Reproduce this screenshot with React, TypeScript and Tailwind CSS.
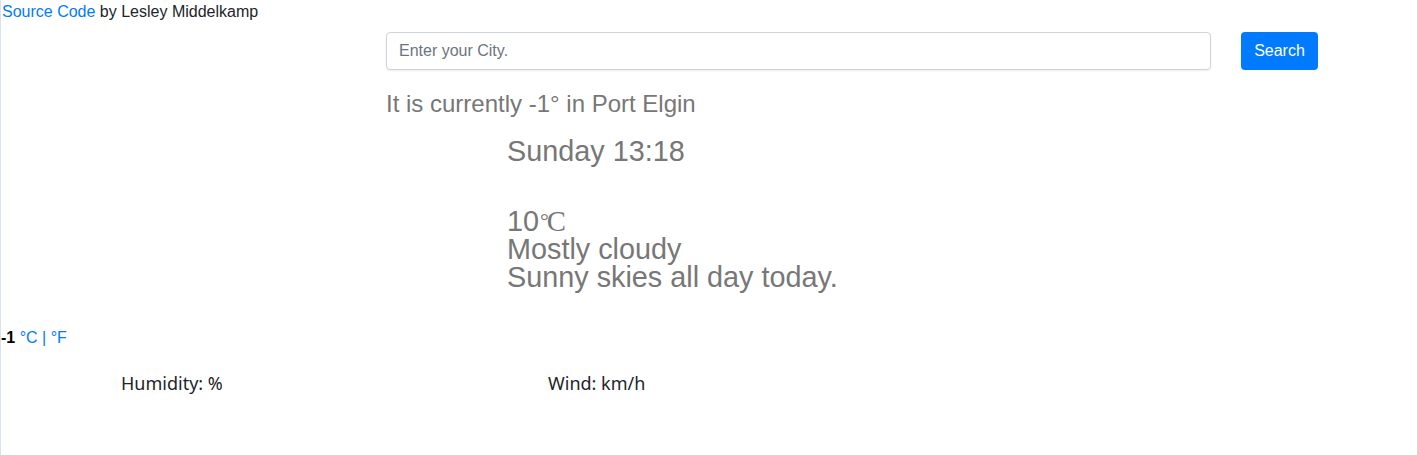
export default function App() {
  return (
    <div className="min-h-[455px] border-l border-[#d9e2f1] bg-white text-[#212529] font-['Liberation_Sans',Arial,sans-serif]">
      <div className="text-[16px] leading-[24px] pl-px">
        <a href="#" className="text-[#007bff]">
          Source Code
        </a>{" "}
        by Lesley Middelkamp
      </div>

      <div className="ml-[385px] mt-[8px] flex w-[932px] items-center">
        <input
          type="text"
          placeholder="Enter your City."
          className="h-[38px] w-[825px] rounded-[4px] border border-[#ced4da] px-3 text-[16px] text-[#495057] shadow-[0_1px_2px_rgba(0,0,0,0.08)] placeholder:text-[#6c757d] outline-none"
        />
        <button className="ml-[30px] h-[38px] w-[77px] rounded-[4px] bg-[#007bff] text-[16px] text-white">
          Search
        </button>
      </div>

      <div className="ml-[385px] mt-[20px] text-[24px] leading-[28px] text-[#777]">
        It is currently -1° in Port Elgin
      </div>

      <div className="ml-[506px] mt-[17px] text-[#777]">
        <div className="text-[28.8px] leading-[32px]">Sunday 13:18</div>
        <div className="mt-[40px] text-[28.8px] leading-[28px]">
          <div>
            10
            <span className="font-['Liberation_Serif',serif] leading-[10px]">
              <span className="relative top-[-3px] mr-[-2px] ml-px text-[22px] leading-[10px]">°</span>C
            </span>
          </div>
          <div>Mostly cloudy</div>
          <div>Sunny skies all day today.</div>
        </div>
      </div>

      <div className="mt-[35px] text-[16px] leading-[24px]">
        <strong className="text-black">-1</strong>{" "}
        <a href="#" className="text-[#007bff]">
          °C
        </a>{" "}
        <span className="text-[#007bff]">|</span>{" "}
        <a href="#" className="text-[#007bff]">
          °F
        </a>
      </div>

      <div className="mt-[20px] flex pl-[120px] text-[18px] leading-[26px] font-['Noto_Sans',sans-serif]">
        <div className="w-[427px]">Humidity: %</div>
        <div>Wind: km/h</div>
      </div>
    </div>
  );
}
